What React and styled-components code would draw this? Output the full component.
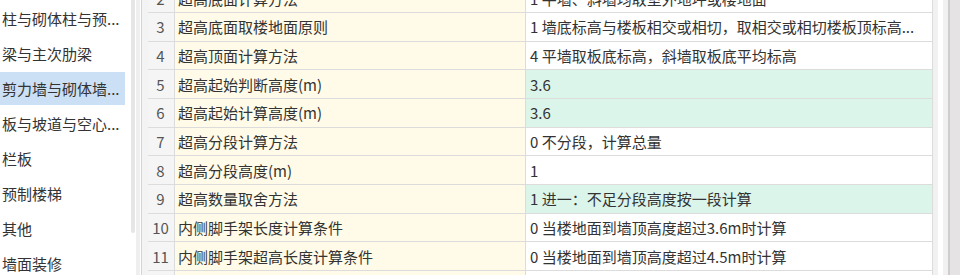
import React from 'react';
import styled, { createGlobalStyle } from 'styled-components';

const GlobalStyle = createGlobalStyle`
  html, body {
    margin: 0;
    padding: 0;
    background: #fff;
  }
  body {
    font-family: "Noto Sans CJK SC", "Noto Sans", sans-serif;
  }
`;

const Screen = styled.div`
  display: flex;
  width: 960px;
  height: 275px;
  overflow: hidden;
  background: #fff;
  color: #333;
  font-size: 15px;
`;

const Sidebar = styled.div`
  position: relative;
  flex: none;
  width: 136px;
  display: flex;
  flex-direction: column;
  gap: 2px;
  padding-top: 2px;
  box-sizing: border-box;
`;

const NavItem = styled.div`
  flex: none;
  width: 125px;
  height: 33px;
  display: flex;
  align-items: center;
  padding-left: 2px;
  box-sizing: border-box;
  white-space: nowrap;
  overflow: hidden;
  background: ${(p) => (p.$active ? '#cce0f5' : 'transparent')};
`;

const SideThumb = styled.div`
  position: absolute;
  top: 0;
  right: 1px;
  width: 4px;
  height: 233px;
  border-radius: 0 0 2px 2px;
  background: #e6e6e6;
`;

const Gutter = styled.div`
  flex: none;
  width: 4px;
  background: #efefef;
  border-right: 1px solid #fff;
`;

const TablePanel = styled.div`
  flex: 1;
  display: flex;
  border-left: 1px solid #d4d4d4;
`;

const Strip = styled.div`
  flex: none;
  width: 6px;
  background: #f3f3f3;
`;

const Grid = styled.div`
  flex: none;
  width: 785px;
  overflow: hidden;
`;

const Rows = styled.div`
  margin-top: -15.67px;
`;

const Row = styled.div`
  display: grid;
  grid-template-columns: 27px 351px 407px;
  height: 28.67px;
  box-sizing: border-box;
  border-bottom: 1px solid #dcdcdc;
`;

const Cell = styled.div`
  display: flex;
  align-items: center;
  box-sizing: border-box;
  border-right: 1px solid #dcdcdc;
  white-space: nowrap;
  overflow: hidden;
`;

const NumCell = styled(Cell)`
  justify-content: center;
  background: #f5f5f5;
  color: #555;
  padding-right: 1px;
`;

const NameCell = styled(Cell)`
  padding-left: 3px;
  background: #fffbe8;
`;

const ValueCell = styled(Cell)`
  padding-left: 4px;
  background: ${(p) => (p.$hl ? '#dcf5eb' : '#fff')};
`;

const VScroll = styled.div`
  flex: none;
  width: 15px;
  display: flex;
  justify-content: center;
  background: #f1f1f1;
`;

const VTrack = styled.div`
  width: 5px;
  background: #fff;
`;

const Edge = styled.div`
  flex: none;
  width: 2px;
  background: #cdcdcd;
`;

const Outer = styled.div`
  flex: 1;
  background: #e5e3e3;
`;

const navItems = [
  { label: '柱与砌体柱与预...' },
  { label: '梁与主次肋梁' },
  { label: '剪力墙与砌体墙...', active: true },
  { label: '板与坡道与空心...' },
  { label: '栏板' },
  { label: '预制楼梯' },
  { label: '其他' },
  { label: '墙面装修' },
];

const rows = [
  { n: 2, name: '超高底面计算方法', value: '1 平墙、斜墙均取室外地坪或楼地面' },
  { n: 3, name: '超高底面取楼地面原则', value: '1 墙底标高与楼板相交或相切，取相交或相切楼板顶标高...' },
  { n: 4, name: '超高顶面计算方法', value: '4 平墙取板底标高，斜墙取板底平均标高' },
  { n: 5, name: '超高起始判断高度(m)', value: '3.6', hl: true },
  { n: 6, name: '超高起始计算高度(m)', value: '3.6', hl: true },
  { n: 7, name: '超高分段计算方法', value: '0 不分段，计算总量' },
  { n: 8, name: '超高分段高度(m)', value: '1' },
  { n: 9, name: '超高数量取舍方法', value: '1 进一：不足分段高度按一段计算', hl: true },
  { n: 10, name: '内侧脚手架长度计算条件', value: '0 当楼地面到墙顶高度超过3.6m时计算' },
  { n: 11, name: '内侧脚手架超高长度计算条件', value: '0 当楼地面到墙顶高度超过4.5m时计算' },
  { n: 12, name: '外侧脚手架计算方法', value: '0 按墙外边线长度计算' },
];

export default function App() {
  return (
    <>
      <GlobalStyle />
      <Screen>
        <Sidebar>
          {navItems.map((item) => (
            <NavItem key={item.label} $active={item.active}>
              {item.label}
            </NavItem>
          ))}
          <SideThumb />
        </Sidebar>
        <Gutter />
        <TablePanel>
          <Strip />
          <Grid>
            <Rows>
              {rows.map((r) => (
                <Row key={r.n}>
                  <NumCell>{r.n}</NumCell>
                  <NameCell>{r.name}</NameCell>
                  <ValueCell $hl={r.hl}>{r.value}</ValueCell>
                </Row>
              ))}
            </Rows>
          </Grid>
          <VScroll>
            <VTrack />
          </VScroll>
          <Edge />
          <Outer />
        </TablePanel>
      </Screen>
    </>
  );
}
